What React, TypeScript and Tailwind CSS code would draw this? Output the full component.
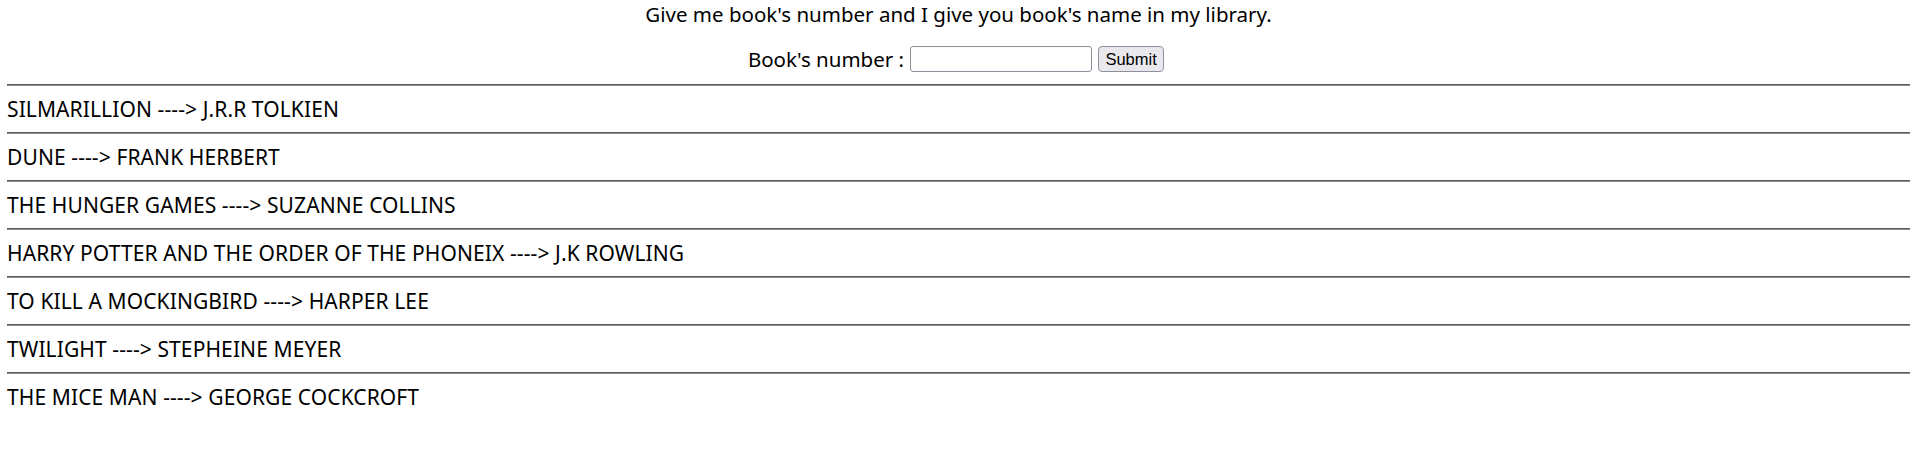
const books = [
  { title: "SILMARILLION", author: "J.R.R TOLKIEN" },
  { title: "DUNE", author: "FRANK HERBERT" },
  { title: "THE HUNGER GAMES", author: "SUZANNE COLLINS" },
  { title: "HARRY POTTER AND THE ORDER OF THE PHONEIX", author: "J.K ROWLING" },
  { title: "TO KILL A MOCKINGBIRD", author: "HARPER LEE" },
  { title: "TWILIGHT", author: "STEPHEINE MEYER" },
  { title: "THE MICE MAN", author: "GEORGE COCKCROFT" },
];

const App = () => {
  return (
    <div className="px-[7px] text-black font-['Noto_Sans',sans-serif] text-[20.5px]">
      <p className="text-center leading-[28px]">
        Give me book's number and I give you book's name in my library.
      </p>

      <form
        className="mt-[18px] h-[26px] pr-[5px] flex items-center justify-center"
        onSubmit={(e) => e.preventDefault()}
      >
        <label className="leading-[28px]" htmlFor="bookNumber">
          Book's number :
        </label>
        <input
          id="bookNumber"
          type="text"
          className="ml-[6px] w-[182px] h-[26px] border border-[#8f8f9d] rounded-[3px] bg-white outline-none"
        />
        <button
          type="submit"
          className="ml-[6px] w-[66px] h-[26px] border border-[#8f8f9d] rounded-[4px] bg-[#e9e9ed] text-[16.5px] leading-none font-['Liberation_Sans',sans-serif]"
        >
          Submit
        </button>
      </form>

      <div className="mt-[12px]">
        {books.map((book) => (
          <div key={book.title}>
            <div className="h-[2px] border-t border-t-[#5c5c5c] border-b border-b-[#8c8c8c]" />
            <div className="h-[46px] flex items-center text-[21px] leading-[28px] tracking-[0.1px]">
              {book.title} ----&gt; {book.author}
            </div>
          </div>
        ))}
      </div>
    </div>
  );
};

export default App;
